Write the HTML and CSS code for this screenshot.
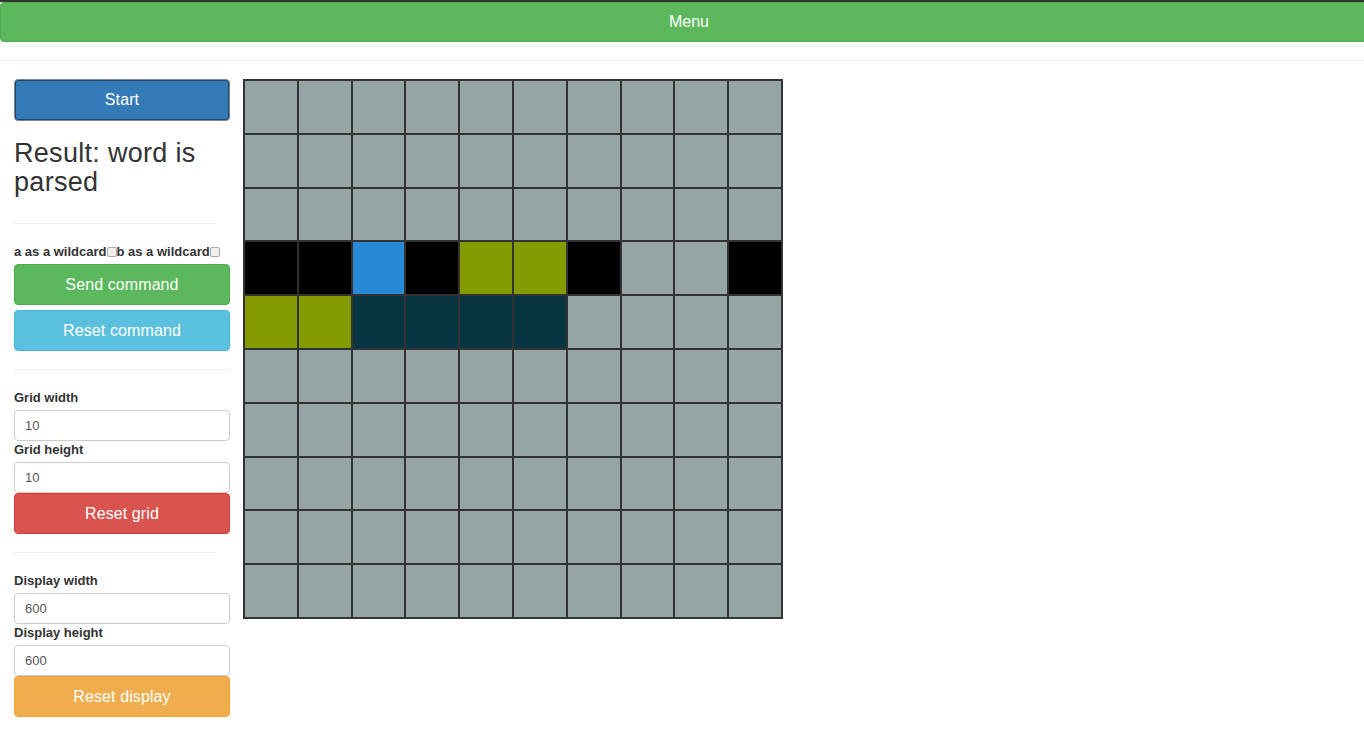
FILE: index.html
```html
<!DOCTYPE html>
<html lang="en">
<head>
<meta charset="utf-8">
<title>Grid parser</title>
<link rel="stylesheet" href="styles.css">
</head>
<body>
<div class="topbar"></div>
<button class="menu-btn" type="button">Menu</button>
<hr class="page-rule">
<div class="main">
  <aside class="sidebar">
    <button class="btn btn-start" type="button">Start</button>
    <h3 class="result">Result: word is parsed</h3>
    <hr class="rule rule-result">
    <div class="wild"><label>a as a wildcard<input type="checkbox" class="chk"></label><label>b as a wildcard<input type="checkbox" class="chk"></label></div>
    <button class="btn btn-success" type="button">Send command</button>
    <button class="btn btn-info" type="button">Reset command</button>
    <hr class="rule">
    <label class="field-label">Grid width</label>
    <input class="field" type="text" value="10">
    <label class="field-label">Grid height</label>
    <input class="field" type="text" value="10">
    <button class="btn btn-danger" type="button">Reset grid</button>
    <hr class="rule rule-short">
    <label class="field-label">Display width</label>
    <input class="field" type="text" value="600">
    <label class="field-label">Display height</label>
    <input class="field" type="text" value="600">
    <button class="btn btn-warning" type="button">Reset display</button>
  </aside>
  <div class="grid">
    <div class="c g"></div><div class="c g"></div><div class="c g"></div><div class="c g"></div><div class="c g"></div><div class="c g"></div><div class="c g"></div><div class="c g"></div><div class="c g"></div><div class="c g"></div>
    <div class="c g"></div><div class="c g"></div><div class="c g"></div><div class="c g"></div><div class="c g"></div><div class="c g"></div><div class="c g"></div><div class="c g"></div><div class="c g"></div><div class="c g"></div>
    <div class="c g"></div><div class="c g"></div><div class="c g"></div><div class="c g"></div><div class="c g"></div><div class="c g"></div><div class="c g"></div><div class="c g"></div><div class="c g"></div><div class="c g"></div>
    <div class="c k"></div><div class="c k"></div><div class="c b"></div><div class="c k"></div><div class="c o"></div><div class="c o"></div><div class="c k"></div><div class="c g"></div><div class="c g"></div><div class="c k"></div>
    <div class="c o"></div><div class="c o"></div><div class="c t"></div><div class="c t"></div><div class="c t"></div><div class="c t"></div><div class="c g"></div><div class="c g"></div><div class="c g"></div><div class="c g"></div>
    <div class="c g"></div><div class="c g"></div><div class="c g"></div><div class="c g"></div><div class="c g"></div><div class="c g"></div><div class="c g"></div><div class="c g"></div><div class="c g"></div><div class="c g"></div>
    <div class="c g"></div><div class="c g"></div><div class="c g"></div><div class="c g"></div><div class="c g"></div><div class="c g"></div><div class="c g"></div><div class="c g"></div><div class="c g"></div><div class="c g"></div>
    <div class="c g"></div><div class="c g"></div><div class="c g"></div><div class="c g"></div><div class="c g"></div><div class="c g"></div><div class="c g"></div><div class="c g"></div><div class="c g"></div><div class="c g"></div>
    <div class="c g"></div><div class="c g"></div><div class="c g"></div><div class="c g"></div><div class="c g"></div><div class="c g"></div><div class="c g"></div><div class="c g"></div><div class="c g"></div><div class="c g"></div>
    <div class="c g"></div><div class="c g"></div><div class="c g"></div><div class="c g"></div><div class="c g"></div><div class="c g"></div><div class="c g"></div><div class="c g"></div><div class="c g"></div><div class="c g"></div>
  </div>
</div>
</body>
</html>
```

FILE: styles.css
```css
html { overflow-x: hidden; }
body {
  margin: 0;
  font-family: "Liberation Sans", Arial, sans-serif;
  color: #333;
  background: #fff;
}
.topbar { height: 2px; background: #333; }
.menu-btn {
  display: block;
  width: 1378px;
  height: 40px;
  margin: 0;
  padding: 0;
  background: #5cb85c;
  border: 1px solid #4cae4c;
  border-radius: 4px;
  color: #fff;
  font-family: "Liberation Sans", Arial, sans-serif;
  font-size: 16px;
}
.page-rule {
  margin: 18px 0;
  border: 0;
  border-top: 1px solid #eee;
  height: 0;
}
.main {
  display: flex;
  align-items: flex-start;
  gap: 13px;
  padding: 0 14px;
}
.sidebar {
  width: 216px;
  display: flex;
  flex-direction: column;
}
.btn {
  display: block;
  width: 216px;
  height: 41px;
  margin: 0;
  padding: 0;
  border-radius: 4px;
  border: 1px solid transparent;
  color: #fff;
  font-family: "Liberation Sans", Arial, sans-serif;
  font-size: 16px;
  letter-spacing: 0.1px;
  text-align: center;
}
.btn-start {
  height: 42px;
  background: #337ab7;
  border-color: #7d8690;
  box-shadow: inset 0 0 0 1px #23466a;
}
.btn-success { background: #5cb85c; border-color: #4cae4c; }
.btn-info { background: #5bc0de; border-color: #46b8da; margin-top: 5px; }
.btn-danger { background: #d9534f; border-color: #d43f3a; }
.btn-warning { background: #f0ad4e; border-color: #eea236; }
.result {
  margin: 18px 0 0;
  font-size: 27px;
  line-height: 29px;
  letter-spacing: 0.3px;
  font-weight: normal;
  color: #333;
}
.rule {
  width: 216px;
  margin: 18px 0 19px;
  border: 0;
  border-top: 1px solid #eee;
  height: 0;
}
.rule-result { margin-top: 26px; margin-bottom: 19px; width: 202px; }
.rule-short { width: 202px; }
.wild {
  display: flex;
  font-size: 13px;
  font-weight: bold;
  line-height: 18px;
  margin-bottom: 3px;
}
.wild label { display: flex; align-items: center; }
.chk {
  appearance: none;
  -webkit-appearance: none;
  width: 10px;
  height: 10px;
  margin: 0 0 1px;
  border: 1px solid #aaa;
  border-radius: 2px;
  background: #eee;
}
.field-label {
  display: block;
  font-size: 13px;
  font-weight: bold;
  line-height: 18px;
  margin-bottom: 3px;
}
.field {
  display: block;
  box-sizing: border-box;
  width: 216px;
  height: 31px;
  margin: 0;
  padding: 0 10px;
  border: 1px solid #ccc;
  border-radius: 4px;
  font-family: "Liberation Sans", Arial, sans-serif;
  font-size: 13px;
  color: #555;
  background: #fff;
}
.grid {
  box-sizing: border-box;
  width: 540px;
  height: 540px;
  padding: 2px;
  gap: 2px;
  background: #333;
  display: grid;
  grid-template-columns: repeat(10, 1fr);
  grid-template-rows: repeat(10, 1fr);
}
.g { background: #95a5a6; }
.k { background: #000; }
.b { background: #288ad6; }
.o { background: #859900; }
.t { background: #073642; }
```
